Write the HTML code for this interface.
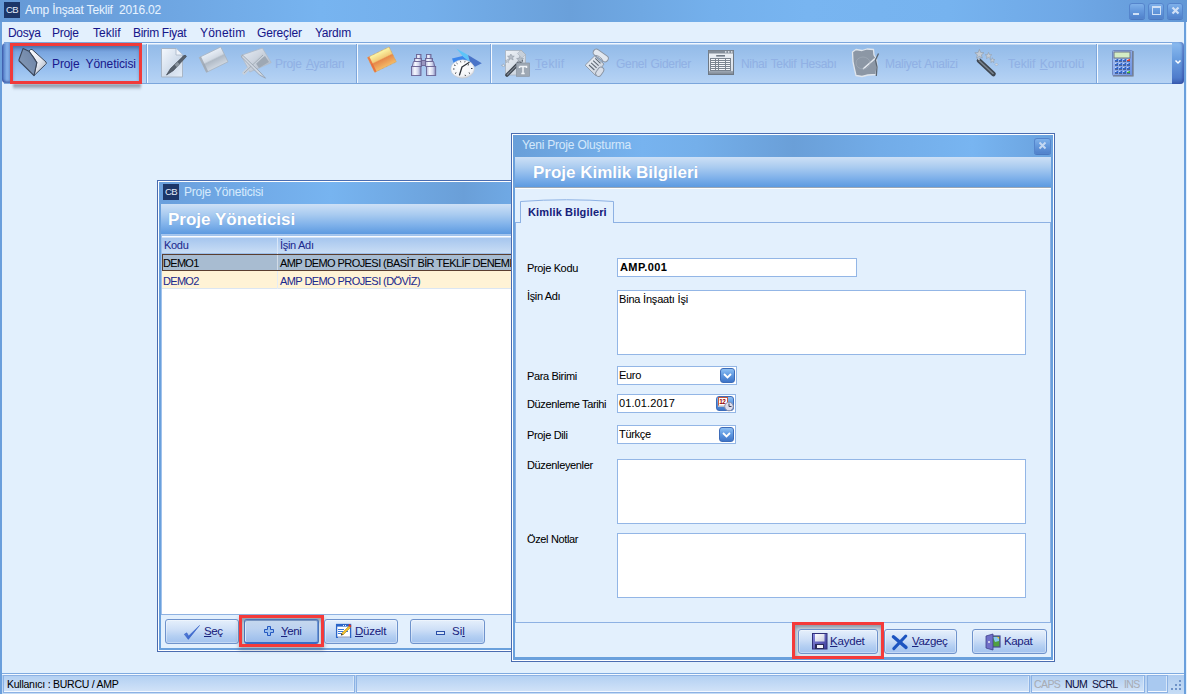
<!DOCTYPE html>
<html><head><meta charset="utf-8">
<style>
*{margin:0;padding:0;box-sizing:border-box}
html,body{width:1187px;height:694px;overflow:hidden}
body{position:relative;background:#e2f0fd;font-family:"Liberation Sans",sans-serif;font-size:11px;color:#000}
.a{position:absolute}
.t{position:absolute;white-space:nowrap;line-height:1}
/* title bars */
.tbar{background:linear-gradient(90deg,#6599d6 0%,#6a9fdb 8%,#77b4f0 27%,#74afeb 36%,#6aa0da 48%,#74b0ec 60%,#78b5f1 68%,#76b3ef 80%,#6fa8e6 90%,#6398d6 100%)}
.cb{position:absolute;background:#1c3668;color:#e4ecfa;font-size:9.5px;text-align:center;line-height:16px;width:16px;height:16px;letter-spacing:-0.6px;font-weight:normal}
.wbtn{position:absolute;width:16px;height:16px;border-radius:3px;background:linear-gradient(180deg,#82b4ec 0%,#6498dc 50%,#4f80ca 100%);box-shadow:inset 0 0 0 1px #5585cc,0 1px 0 #4a78c0}
.hdr{background:linear-gradient(180deg,#cde0f6 0%,#a9cbf0 35%,#7fb1ea 70%,#5d9ae0 100%)}
.hdrtxt{position:absolute;font-weight:bold;color:#fff;font-size:18px;line-height:1;text-shadow:0 0 1px #7aa0d8}
.btn{position:absolute;height:25px;border:1px solid #6f93cc;border-radius:3px;background:linear-gradient(180deg,#e6f0fc 0%,#cfe0f7 40%,#b4cff2 70%,#a2c2ee 100%);box-shadow:inset 0 0 0 1px rgba(255,255,255,.35);color:#1a237e;font-size:12px}
.inp{position:absolute;background:#fff;border:1px solid #93b6e6}
.lbl{position:absolute;white-space:nowrap;line-height:1;font-size:11px;color:#000;letter-spacing:-0.35px}
.dis{color:#91b1e5}
.menu{position:absolute;top:27px;font-size:12px;color:#17178a;line-height:1;white-space:nowrap;letter-spacing:-0.3px}
.tsep{position:absolute;top:44px;width:2px;height:39px;border-left:1px solid #7ea7dc;border-right:1px solid #f4f9ff}
.st{position:absolute;font-size:10.5px;line-height:1;white-space:nowrap;letter-spacing:-0.6px}
.t,.lbl,.menu,.st{-webkit-text-stroke:0.05px currentColor}
.hdrtxt{-webkit-text-stroke:0}
u{text-decoration:underline;text-underline-offset:1px;text-decoration-thickness:1px}
</style></head><body>

<!-- main title bar -->
<div class="a tbar" style="left:0;top:0;width:1187px;height:22px"></div>
<div class="cb" style="left:4px;top:2px">CB</div>
<div class="t" style="left:25px;top:4px;font-size:12px;color:#e6f2ff;letter-spacing:-0.2px">Amp İnşaat Teklif&nbsp; 2016.02</div>
<div class="wbtn" style="left:1129px;top:3px"><div class="a" style="left:4px;top:10px;width:6px;height:2px;background:#d0e0f6"></div></div>
<div class="wbtn" style="left:1148px;top:3px"><div class="a" style="left:4px;top:3px;width:9px;height:9px;border:1px solid #d0e0f6;border-top-width:2px"></div></div>
<div class="wbtn" style="left:1167px;top:3px"><svg class="a" style="left:0;top:0" width="17" height="16"><path d="M5.5 4.5 L11.5 10.5 M11.5 4.5 L5.5 10.5" stroke="#d0e0f6" stroke-width="2.2"/></svg></div>

<!-- window side borders -->
<div class="a" style="left:0;top:22px;width:2px;height:672px;background:#6a9fdc"></div>
<div class="a" style="left:1184px;top:22px;width:2px;height:672px;background:#6a9fdc"></div>
<div class="a" style="left:1186px;top:22px;width:1px;height:672px;background:#e6f1fc"></div>

<!-- menu bar -->
<div class="a" style="left:2px;top:22px;width:1182px;height:20px;background:#e3f0fd"></div>
<div class="menu" style="left:8px">Dosya</div>
<div class="menu" style="left:52px">Proje</div>
<div class="menu" style="left:93px;letter-spacing:0.05px">Teklif</div>
<div class="menu" style="left:133px">Birim Fiyat</div>
<div class="menu" style="left:200px;letter-spacing:0.2px">Yönetim</div>
<div class="menu" style="left:257px;letter-spacing:-0.15px">Gereçler</div>
<div class="menu" style="left:315px">Yardım</div>

<!-- toolbar -->
<div class="a" style="left:2px;top:42px;width:1182px;height:42px;background:#e3f0fd"></div>
<div class="a" style="left:4px;top:42px;width:1170px;height:42px;border-top:1px solid #7ba6dc;border-bottom:1px solid #7ba6dc;background:linear-gradient(180deg,#f2f8ff 0,#f2f8ff 1px,#93bbe8 2px,#a3c6ef 50%,#b6d3f4 100%)"></div>
<div class="a" style="left:2px;top:43px;width:8px;height:40px;border-radius:4px 0 0 4px;background:linear-gradient(90deg,#3e5eb0 0%,#6590d4 30%,#84b0ea 60%,#7aa6e2 100%);box-shadow:inset 0 -2px 2px rgba(40,60,140,.5)"></div>
<div class="a" style="left:1172px;top:42px;width:12px;height:42px;border-radius:0 4px 4px 0;background:linear-gradient(180deg,#8cbcf0 0%,#6a9ee0 40%,#4f7ccc 85%,#3a5cb0 100%);box-shadow:inset -2px 0 2px rgba(40,60,150,.45)"></div>
<svg class="a" style="left:1172px;top:42px" width="12" height="42"><path d="M3.5 18.5 L6 21 L8.5 18.5" stroke="#fff" stroke-width="1.5" fill="none"/></svg>

<!-- toolbar content -->
<!-- red highlight: proje yoneticisi -->
<div class="a" style="left:13px;top:84px;width:128px;height:6px;background:linear-gradient(180deg,rgba(70,80,100,.7),rgba(70,80,100,0));filter:blur(1.2px)"></div>
<div class="a" style="left:10px;top:43px;width:132px;height:41px;border:3px solid #f03a3a;background:linear-gradient(180deg,#5f89c6 0%,#7aa6e0 18%,#8fb9ec 50%,#a9cdf4 100%)"></div>
<div class="a" style="left:13px;top:46px;width:126px;height:35px;box-shadow:inset 0 2px 3px rgba(40,70,120,.35)"></div>
<svg class="a" style="left:14px;top:45px" width="36" height="36" viewBox="0 0 36 36">
 <defs><linearGradient id="fw" x1="0" y1="0" x2="1" y2="1"><stop offset="0" stop-color="#fdfeff"/><stop offset=".55" stop-color="#e4e8f0"/><stop offset="1" stop-color="#9aa4b4"/></linearGradient>
 <linearGradient id="ff" x1="0" y1="1" x2="1" y2="0"><stop offset="0" stop-color="#b4c2d6"/><stop offset=".3" stop-color="#7f94b2"/><stop offset="1" stop-color="#6a82a6"/></linearGradient></defs>
 <path d="M15 6.2 Q16 4 18 4.4 L32 17 Q33 18.5 31.5 19.5 L20 30.6 L22.8 17.6 L19.5 12.4 Z" fill="url(#fw)" stroke="#3e4a5c" stroke-width="1"/>
 <path d="M9.1 3.4 L15 6.2 L19.5 12.4 L22.8 17.6 L20 30.6 L5.2 16 Q4.6 15 5.2 14 Z" fill="url(#ff)" stroke="#3a4558" stroke-width="1.1" stroke-linejoin="round"/>
</svg>
<div class="t" style="left:52px;top:58px;font-size:12px;color:#1b1b8e;letter-spacing:-0.1px;word-spacing:3px">Proje Yöneticisi</div>

<div class="tsep" style="left:146px"></div>

<!-- doc + pen -->
<svg class="a" style="left:160px;top:47px" width="28" height="32" viewBox="0 0 28 32">
 <defs><linearGradient id="dp" x1="0" y1="0" x2="1" y2="1"><stop offset="0" stop-color="#f4f8fd"/><stop offset=".6" stop-color="#cfdbea"/><stop offset="1" stop-color="#e6eef8"/></linearGradient></defs>
 <path d="M1.5 1.5 H16 L22.5 8 V30 H1.5 Z" fill="url(#dp)" stroke="#a9b6c6" stroke-width="1"/>
 <path d="M16 1.5 V8 H22.5" fill="#f0f4fa" stroke="#a9b6c6" stroke-width=".8"/>
 <path d="M6.5 28 L10.5 21.5 L23.8 8.6 Q26 7.6 26.4 9.6 L13.5 23.5 Z" fill="#56606c" stroke="#3a424c" stroke-width=".6"/>
 <path d="M14.5 17.8 L17.5 15 L20 17.5 L17 20.3 Z" fill="#8a949e"/>
</svg>
<!-- gray folder -->
<svg class="a" style="left:194px;top:44px" width="40" height="34" viewBox="0 0 40 34">
 <defs><linearGradient id="gf" x1="0" y1="0" x2="0" y2="1"><stop offset="0" stop-color="#e8eef6"/><stop offset=".42" stop-color="#d2dae4"/><stop offset=".52" stop-color="#b0bac6"/><stop offset="1" stop-color="#d0d8e2"/></linearGradient></defs>
 <g transform="translate(5.2,13.5) rotate(-26)">
  <rect x="0" y="0" width="24" height="16.5" fill="url(#gf)" stroke="#a8b2be" stroke-width=".7"/>
  <rect x="0" y="0" width="2" height="16.5" fill="#9aa4b0" opacity=".8"/>
 </g>
</svg>
<!-- cross tools -->
<svg class="a" style="left:238px;top:45px" width="36" height="36" viewBox="0 0 36 36">
 <defs><linearGradient id="cf" x1="0" y1="0" x2="1" y2="1"><stop offset="0" stop-color="#e8eef6"/><stop offset=".6" stop-color="#c4ccd8"/><stop offset="1" stop-color="#aab4c2"/></linearGradient></defs>
 <path d="M3.1 10.4 L24.4 3.1 L33.2 17.6 L11.9 27 Z" fill="url(#cf)" stroke="#b0bac6" stroke-width=".8"/>
 <path d="M17 17 L27 11 L31 17 L21 23 Z" fill="#9ea8b4"/>
 <path d="M6 28 L25 10" stroke="#c8d0da" stroke-width="3.2" stroke-linecap="round"/>
 <path d="M6 28 L25 10" stroke="#98a2ae" stroke-width=".8"/>
 <path d="M4.5 10 L23 28 L27.5 33.2 L21.5 30 L3.5 12 Z" fill="#d0d8e2" stroke="#8c96a4" stroke-width=".7"/>
</svg>
<div class="t dis" style="left:275px;top:58px;font-size:12px;letter-spacing:-0.3px;word-spacing:2px">Proje <u>A</u>yarları</div>

<div class="tsep" style="left:356px"></div>

<!-- orange folder -->
<svg class="a" style="left:362px;top:44px" width="40" height="34" viewBox="0 0 40 34">
 <defs><linearGradient id="of" x1="0" y1="0" x2="0" y2="1"><stop offset="0" stop-color="#fcf8a8"/><stop offset=".42" stop-color="#f2cc7a"/><stop offset=".5" stop-color="#e6884a"/><stop offset="1" stop-color="#f4bc68"/></linearGradient></defs>
 <g transform="translate(5.5,13.5) rotate(-26)">
  <rect x="0" y="0" width="24" height="16.5" fill="url(#of)" stroke="#d8a050" stroke-width=".7" stroke-dasharray="1 .5"/>
  <rect x="0" y="0" width="2" height="16.5" fill="#e8683a" opacity=".85"/>
 </g>
</svg>
<!-- binoculars -->
<svg class="a" style="left:405px;top:48px" width="36" height="32" viewBox="0 0 36 32">
 <defs><linearGradient id="bn" x1="0" y1="0" x2="1" y2="0"><stop offset="0" stop-color="#b4b8dc"/><stop offset=".35" stop-color="#f6f8fe"/><stop offset=".7" stop-color="#d0d4ec"/><stop offset="1" stop-color="#7c80b4"/></linearGradient></defs>
 <g stroke="#6a6494" stroke-width="0.9" fill="url(#bn)">
 <rect x="16.5" y="12.5" width="4" height="5" fill="#9a96c0"/>
 <rect x="11.5" y="6.5" width="4.5" height="4"/>
 <rect x="21.5" y="6.5" width="4.5" height="4"/>
 <rect x="9.5" y="10.5" width="7" height="3"/>
 <rect x="20.5" y="10.5" width="7" height="3"/>
 <path d="M8.5 13.5 H16.5 V18.5 H7.2 Z"/>
 <path d="M20.5 13.5 H28.5 L29.8 18.5 H20.5 Z"/>
 <rect x="6.5" y="18.5" width="9.5" height="9"/>
 <rect x="21.5" y="18.5" width="9.2" height="9"/>
 </g>
</svg>
<!-- clock -->
<svg class="a" style="left:446px;top:45px" width="40" height="36" viewBox="0 0 40 36">
 <defs><radialGradient id="ck" cx=".45" cy=".35" r=".7"><stop offset="0" stop-color="#ffffff"/><stop offset=".75" stop-color="#f4f5f8"/><stop offset="1" stop-color="#b8bcc4"/></radialGradient></defs>
 <path d="M6 13.5 L16.6 10.9 L24 17 L8 19 Z" fill="#3c86ec"/>
 <path d="M10.4 3.4 L22 10 L24 17 L16.6 10.9 Z" fill="#5cc4f8"/>
 <path d="M22 10 L35.8 18.2 L29 21.8 L24 17 Z" fill="#4a74c8"/>
 <ellipse cx="16.6" cy="24" rx="11.7" ry="9.2" fill="url(#ck)" stroke="#c4c8d0" stroke-width=".5"/>
 <path d="M16 22 L23 17.5 M16 22 L13.5 30" stroke="#2e323a" stroke-width="1.3" stroke-linecap="round"/>
 <g stroke="#3a3e46" stroke-width="1"><path d="M14.5 16.3 L14.8 17.3 M19 16.3 L18.7 17.3 M8 20 L9.5 20.5 M7 24 L8.5 24 M26.5 23.5 L25 23.5 M9 28.5 L10.3 27.7 M24 28.5 L22.8 27.7 M19.5 31 L19 29.8 M10.5 18 L11.5 18.8 M23 19.5 L21.8 20.2"/></g>
</svg>

<div class="tsep" style="left:490px"></div>

<!-- wand + T -->
<svg class="a" style="left:500px;top:45px" width="36" height="36" viewBox="0 0 36 36">
 <defs><linearGradient id="wt" x1="0" y1="0" x2="1" y2="1"><stop offset="0" stop-color="#f0f4f9"/><stop offset="1" stop-color="#c2ccd8"/></linearGradient>
 <linearGradient id="wd" x1="0" y1="0" x2="1" y2="0"><stop offset="0" stop-color="#8a939e"/><stop offset=".5" stop-color="#4e5762"/><stop offset="1" stop-color="#7a838e"/></linearGradient></defs>
 <path d="M5.5 5.5 H21 L25.5 9.5 V30 H5.5 Z" fill="url(#wt)" stroke="#a8b2be" stroke-width=".8"/>
 <path d="M21 5 L25.5 9.5 L22 13 L17.5 8.5 Z" fill="#c8d0da" stroke="#8e98a4" stroke-width=".6" stroke-dasharray="1 .6"/>
 <path d="M7 30 L21 15.8" stroke="#3e4650" stroke-width="3.6" stroke-linecap="round"/>
 <path d="M7 30 L21 15.8" stroke="#7e8792" stroke-width="1.2"/>
 <path d="M19.5 11.5 L21 13.5 L23.5 13.5 L21.8 15.2 L22.5 17.5 L20 16.3 L17.8 17.5 L18.4 15 L16.6 13.5 L19 13.3 Z" fill="#b4bcc6" stroke="#8a94a0" stroke-width=".5"/>
 <path d="M10.9 9 L12 11 L14.3 11.2 L12.6 12.7 L13.2 15 L10.9 13.8 L8.6 15 L9.2 12.7 L7.5 11.2 L9.8 11 Z" fill="#b4bcc6" stroke="#8a94a0" stroke-width=".5"/>
 <path d="M7.3 14.3 L8 15.4 L9.3 15.6 L8.4 16.4 L8.7 17.7 L7.3 17 L6 17.7 L6.3 16.4 L5.3 15.6 L6.6 15.4 Z" fill="#c8d0da" stroke="#8a94a0" stroke-width=".4"/>
 <path d="M3.4 18.7 L4.1 20.2 L5.5 20.3 L4.1 21 L3.4 22 L2.7 21 L1.3 20.3 L2.7 20.2 Z" fill="#e2e8f0" stroke="#8a94a0" stroke-width=".4"/>
 <rect x="16.5" y="18" width="13" height="13.3" fill="#9ea8b4" stroke="#8a94a0" stroke-width=".7"/>
 <path d="M19.5 21.5 H26.5 V23 M19.5 21.5 V23 M23 21.5 V28.5 M21.3 28.5 H24.7" stroke="#f2f5f9" stroke-width="1.5" fill="none"/>
</svg>
<div class="t dis" style="left:535px;top:58px;font-size:12px;letter-spacing:0.35px"><u>T</u>eklif</div>
<!-- scroll -->
<svg class="a" style="left:580px;top:45px" width="36" height="36" viewBox="0 0 36 36">
 <defs><linearGradient id="sc" x1="0" y1="0" x2="1" y2="1"><stop offset="0" stop-color="#f0f4f9"/><stop offset="1" stop-color="#c4ccd8"/></linearGradient></defs>
 <path d="M5.2 20.2 L14.5 11 L24 19 L15.6 30.5 Z" fill="url(#sc)" stroke="#8a94a2" stroke-width=".9" stroke-linejoin="round"/>
 <path d="M18.5 28.5 L21 25" stroke="#8a94a2" stroke-width="6.6" stroke-linecap="round"/>
 <path d="M18.5 28.5 L21 25" stroke="#d8dee8" stroke-width="4.8" stroke-linecap="round"/>
 <path d="M16.5 7.5 L25 13.5" stroke="#8a94a2" stroke-width="7.4" stroke-linecap="round"/>
 <path d="M16.5 7.5 L25 13.5" stroke="#e2e8f0" stroke-width="5.6" stroke-linecap="round"/>
 <path d="M14.5 11 Q17 9 22 14 L22.5 17.5" fill="none" stroke="#8a94a2" stroke-width=".9"/>
 <g stroke="#5e6874" stroke-width="1.1"><path d="M15.3 13.4 L20.5 18.4 M13.2 15.6 L18.6 20.6 M11.1 17.8 L16.6 22.8 M9.0 20 L14.4 25"/></g>
</svg>
<div class="t dis" style="left:616px;top:58px;font-size:12px;letter-spacing:-0.3px;word-spacing:1px">Genel Giderler</div>
<!-- table -->
<svg class="a" style="left:704px;top:45px" width="36" height="36" viewBox="0 0 36 36">
 <defs><linearGradient id="tb" x1="0" y1="0" x2="0" y2="1"><stop offset="0" stop-color="#eef2f7"/><stop offset=".85" stop-color="#d8dfe8"/><stop offset=".86" stop-color="#9ea8b4"/><stop offset="1" stop-color="#7c8692"/></linearGradient></defs>
 <rect x="4.5" y="5.5" width="25" height="24" fill="url(#tb)" stroke="#6e7884" stroke-width="1"/>
 <rect x="4.5" y="5.5" width="25" height="3" fill="#848e9a"/>
 <g fill="#e8ecf2"><rect x="21" y="6.2" width="1.4" height="1.4"/><rect x="24" y="6.2" width="1.4" height="1.4"/><rect x="27" y="6.2" width="1.4" height="1.4"/></g>
 <rect x="12.2" y="10" width="8.8" height="1.6" fill="#707a86"/>
 <rect x="6" y="13" width="21" height="13" fill="#7a8490"/>
 <g fill="#f4f6fa"><rect x="7" y="14" width="4" height="1"/><rect x="12" y="14" width="2" height="1"/><rect x="15" y="14" width="6" height="1"/><rect x="22" y="14" width="4" height="1"/><rect x="7" y="16" width="4" height="1"/><rect x="12" y="16" width="2" height="1"/><rect x="15" y="16" width="6" height="1"/><rect x="22" y="16" width="4" height="1"/><rect x="7" y="18" width="4" height="1"/><rect x="12" y="18" width="2" height="1"/><rect x="15" y="18" width="6" height="1"/><rect x="22" y="18" width="4" height="1"/><rect x="7" y="20" width="4" height="1"/><rect x="12" y="20" width="2" height="1"/><rect x="15" y="20" width="6" height="1"/><rect x="22" y="20" width="4" height="1"/><rect x="7" y="22" width="4" height="1"/><rect x="12" y="22" width="2" height="1"/><rect x="15" y="22" width="6" height="1"/><rect x="22" y="22" width="4" height="1"/><rect x="7" y="24" width="4" height="1"/><rect x="12" y="24" width="2" height="1"/><rect x="15" y="24" width="6" height="1"/><rect x="22" y="24" width="4" height="1"/></g>
</svg>
<div class="t dis" style="left:741px;top:58px;font-size:12px;letter-spacing:-0.3px;word-spacing:1px">Nihai Teklif Hesabı</div>
<!-- maliyet -->
<svg class="a" style="left:848px;top:45px" width="36" height="36" viewBox="0 0 36 36">
 <path d="M4.5 7 L8 4.5 L14 5.5 L19 4 L25.5 4.5 L26 10 L28.5 14 L29 22 L28 29.5 L20 30 L14 31.5 L8 30.5 L6.5 24 L5 17 Z" fill="#8c97a5" stroke="#dfe5ec" stroke-width="1.3" stroke-linejoin="round"/>
 <path d="M15 24 L27 13.5" stroke="#e6ebf1" stroke-width="1.6"/>
 <path d="M30.5 8.5 L27.5 15 L29 22 L28.3 31" stroke="#5c6672" stroke-width="1.3" fill="none"/>
 <ellipse cx="15" cy="18" rx="7" ry="6" fill="none" stroke="#a4aebb" stroke-width=".6"/>
</svg>
<div class="t dis" style="left:885px;top:58px;font-size:12px;letter-spacing:-0.3px;word-spacing:1px">Maliyet Analizi</div>
<!-- wand -->
<svg class="a" style="left:968px;top:45px" width="36" height="36" viewBox="0 0 36 36">
 <path d="M11 15.5 L25.5 29" stroke="#3e4650" stroke-width="4.6" stroke-linecap="round"/>
 <path d="M11 15.5 L25.5 29" stroke="#7a848f" stroke-width="1.6"/>
 <path d="M11.40 4.40 L12.67 7.45 L15.97 7.72 L13.45 9.87 L14.22 13.08 L11.40 11.36 L8.58 13.08 L9.35 9.87 L6.83 7.72 L10.13 7.45 Z" fill="#c4ccd6" stroke="#8e98a4" stroke-width=".6"/>
 <path d="M10.5 12.5 L11 15" stroke="#b8c0ca" stroke-width="2"/>
 <path d="M20.50 7.30 L21.43 9.53 L23.83 9.72 L22.00 11.29 L22.56 13.63 L20.50 12.38 L18.44 13.63 L19.00 11.29 L17.17 9.72 L19.57 9.53 Z" fill="#c4ccd6" stroke="#8e98a4" stroke-width=".5"/>
 <path d="M24.40 12.70 L25.11 14.42 L26.97 14.57 L25.56 15.78 L25.99 17.58 L24.40 16.62 L22.81 17.58 L23.24 15.78 L21.83 14.57 L23.69 14.42 Z" fill="#c4ccd6" stroke="#8e98a4" stroke-width=".5"/>
 <path d="M28.5 18 L30 19.5 L28.5 21 L27 19.5 Z" fill="#d4dae2" stroke="#8e98a4" stroke-width=".4"/>
</svg>
<div class="t dis" style="left:1008px;top:58px;font-size:12px;letter-spacing:0px;word-spacing:1px">Teklif <u>K</u>ontrolü</div>

<div class="tsep" style="left:1096px"></div>
<!-- calculator -->
<svg class="a" style="left:1112px;top:50px" width="22" height="27" viewBox="0 0 22 27">
 <defs><linearGradient id="cl" x1="0" y1="0" x2="1" y2="1"><stop offset="0" stop-color="#a8c4f4"/><stop offset="1" stop-color="#6a8ee0"/></linearGradient></defs>
 <rect x="0.5" y="0.5" width="20" height="25" rx="1" fill="url(#cl)" stroke="#7088c0" stroke-width="1"/>
 <path d="M21 1 V26 H1" stroke="#6e7684" stroke-width="1.2" fill="none"/>
 <rect x="2" y="2" width="16" height="6" fill="#d4ecc4" stroke="#6e7684" stroke-width="1"/>
 <g><rect x="3" y="9" width="3" height="2" fill="#2e64c8"/><rect x="3" y="9" width="1.5" height="1" fill="#e8f0fc" opacity=".8"/><rect x="3" y="11" width="3" height="1" fill="#3a4a70" opacity=".7"/><rect x="7" y="9" width="3" height="2" fill="#2e64c8"/><rect x="7" y="9" width="1.5" height="1" fill="#e8f0fc" opacity=".8"/><rect x="7" y="11" width="3" height="1" fill="#3a4a70" opacity=".7"/><rect x="11" y="9" width="3" height="2" fill="#2e64c8"/><rect x="11" y="9" width="1.5" height="1" fill="#e8f0fc" opacity=".8"/><rect x="11" y="11" width="3" height="1" fill="#3a4a70" opacity=".7"/><rect x="15" y="9" width="3" height="2" fill="#e04030"/><rect x="15" y="9" width="1.5" height="1" fill="#e8f0fc" opacity=".8"/><rect x="15" y="11" width="3" height="1" fill="#3a4a70" opacity=".7"/><rect x="3" y="13" width="3" height="2" fill="#2e64c8"/><rect x="3" y="13" width="1.5" height="1" fill="#e8f0fc" opacity=".8"/><rect x="3" y="15" width="3" height="1" fill="#3a4a70" opacity=".7"/><rect x="7" y="13" width="3" height="2" fill="#2e64c8"/><rect x="7" y="13" width="1.5" height="1" fill="#e8f0fc" opacity=".8"/><rect x="7" y="15" width="3" height="1" fill="#3a4a70" opacity=".7"/><rect x="11" y="13" width="3" height="2" fill="#2e64c8"/><rect x="11" y="13" width="1.5" height="1" fill="#e8f0fc" opacity=".8"/><rect x="11" y="15" width="3" height="1" fill="#3a4a70" opacity=".7"/><rect x="15" y="13" width="3" height="2" fill="#2e64c8"/><rect x="15" y="13" width="1.5" height="1" fill="#e8f0fc" opacity=".8"/><rect x="15" y="15" width="3" height="1" fill="#3a4a70" opacity=".7"/><rect x="3" y="17" width="3" height="2" fill="#2e64c8"/><rect x="3" y="17" width="1.5" height="1" fill="#e8f0fc" opacity=".8"/><rect x="3" y="19" width="3" height="1" fill="#3a4a70" opacity=".7"/><rect x="7" y="17" width="3" height="2" fill="#2e64c8"/><rect x="7" y="17" width="1.5" height="1" fill="#e8f0fc" opacity=".8"/><rect x="7" y="19" width="3" height="1" fill="#3a4a70" opacity=".7"/><rect x="11" y="17" width="3" height="2" fill="#2e64c8"/><rect x="11" y="17" width="1.5" height="1" fill="#e8f0fc" opacity=".8"/><rect x="11" y="19" width="3" height="1" fill="#3a4a70" opacity=".7"/><rect x="15" y="17" width="3" height="2" fill="#2e64c8"/><rect x="15" y="17" width="1.5" height="1" fill="#e8f0fc" opacity=".8"/><rect x="15" y="19" width="3" height="1" fill="#3a4a70" opacity=".7"/><rect x="3" y="21" width="3" height="2" fill="#2e64c8"/><rect x="3" y="21" width="1.5" height="1" fill="#e8f0fc" opacity=".8"/><rect x="3" y="23" width="3" height="1" fill="#3a4a70" opacity=".7"/><rect x="7" y="21" width="3" height="2" fill="#2e64c8"/><rect x="7" y="21" width="1.5" height="1" fill="#e8f0fc" opacity=".8"/><rect x="7" y="23" width="3" height="1" fill="#3a4a70" opacity=".7"/><rect x="11" y="21" width="3" height="2" fill="#2e64c8"/><rect x="11" y="21" width="1.5" height="1" fill="#e8f0fc" opacity=".8"/><rect x="11" y="23" width="3" height="1" fill="#3a4a70" opacity=".7"/><rect x="15" y="21" width="3" height="2" fill="#40b040"/><rect x="15" y="21" width="1.5" height="1" fill="#e8f0fc" opacity=".8"/><rect x="15" y="23" width="3" height="1" fill="#3a4a70" opacity=".7"/></g>
</svg>


<!-- ============ child window: Proje Yoneticisi ============ -->
<div class="a" style="left:157px;top:180px;width:360px;height:472px;border:1px solid #4a6cb0;background:#fff"></div>
<div class="a" style="left:159px;top:182px;width:358px;height:468px;background:#6aa0dc"></div>
<div class="a tbar" style="left:159px;top:182px;width:358px;height:22px;background:linear-gradient(90deg,#6a9fdc 0%,#72ace9 30%,#77b4f0 48%,#6a9fd8 85%,#70aae6 100%)"></div>
<div class="cb" style="left:163px;top:184px">CB</div>
<div class="t" style="left:184px;top:186px;font-size:12px;color:#d6eafc;letter-spacing:-0.2px">Proje Yöneticisi</div>
<div class="a hdr" style="left:161px;top:204px;width:356px;height:30px"></div>
<div class="hdrtxt" style="left:168px;top:211px;font-size:17px">Proje Yöneticisi</div>
<div class="a" style="left:161px;top:234px;width:356px;height:1px;background:#a6c6ee"></div>
<!-- grid -->
<div class="a" style="left:161px;top:235px;width:356px;height:380px;background:#fff;border:1px solid #a0c2ec"></div>
<div class="a" style="left:162px;top:236px;width:354px;height:18px;background:linear-gradient(180deg,#fafcff 0,#fafcff 1px,#a6c6ee 2px,#c9ddf5 100%);border-bottom:1px solid #9ebfe9"></div>
<div class="a" style="left:277px;top:237px;width:1px;height:17px;background:#d8e6f8"></div>
<div class="t" style="left:164px;top:240px;font-size:11px;color:#1c2a8e;letter-spacing:-0.3px">Kodu</div>
<div class="t" style="left:280px;top:240px;font-size:11px;color:#1c2a8e;letter-spacing:-0.3px">İşin Adı</div>
<div class="a" style="left:162px;top:254px;width:354px;height:17px;background:#a8bcd1;border:1px solid #5a3e30"></div>
<div class="a" style="left:277px;top:255px;width:1px;height:15px;background:#d2dbe6"></div>
<div class="t" style="left:163px;top:258px;font-size:11px;color:#000;letter-spacing:-0.7px">DEMO1</div>
<div class="t" style="left:280px;top:258px;font-size:11px;color:#000;letter-spacing:-0.575px">AMP DEMO PROJESI (BASİT BİR TEKLİF DENEMESİ)</div>
<div class="a" style="left:162px;top:271px;width:354px;height:18px;background:#fff3d6;border-bottom:1px solid #dbe6f3"></div>
<div class="a" style="left:277px;top:271px;width:1px;height:18px;background:#e4ecf5"></div>
<div class="t" style="left:163px;top:276px;font-size:11px;color:#1c2a8e;letter-spacing:-0.7px">DEMO2</div>
<div class="t" style="left:280px;top:276px;font-size:11px;color:#1c2a8e;letter-spacing:-0.575px">AMP DEMO PROJESI (DÖVİZ)</div>
<!-- button strip -->
<div class="a" style="left:161px;top:614px;width:356px;height:34px;background:#e3f0fd;border-top:1px solid #8fb2e2"></div>

<div class="btn" style="left:165px;top:619px;width:74px">
 <svg class="a" style="left:12px;top:-1px" width="26" height="26" viewBox="0 0 26 26"><defs><linearGradient id="ck2" x1="0" y1="0" x2="1" y2="1"><stop offset="0" stop-color="#6c90dc"/><stop offset="1" stop-color="#2050c8"/></linearGradient></defs><path d="M6.3 15.3 L8.8 13.8 L10.6 17 L21.6 6.4 L10.3 20.4 Z" fill="url(#ck2)" stroke="#2a58c0" stroke-width=".5" stroke-linejoin="round"/></svg>
 <div class="t" style="left:38px;top:6px;font-size:11.5px;letter-spacing:-0.35px"><u>S</u>eç</div>
</div>
<div class="a" style="left:242px;top:618px;width:79px;height:26px;background:#dce8f4;box-shadow:inset 1px 3px 4px rgba(70,80,95,.5)"></div>
<div class="a" style="left:239px;top:615px;width:85px;height:32px;border:3px solid #f43a3a;box-shadow:0 3px 4px rgba(60,70,90,.4)"></div>
<div class="btn" style="left:244px;top:619px;width:75px;border-color:#4a74b8;border-bottom:2px solid #3a6cc8;background:linear-gradient(180deg,#c6d8ee 0%,#bcd2f0 40%,#a8c6ee 75%,#9cbcea 100%);box-shadow:inset 0 1px 0 #7894c0,inset 1px 0 0 #dce8f8,inset -1px 0 0 #6a96d8">
 <svg class="a" style="left:19px;top:6px" width="11" height="11" viewBox="0 0 11 11"><path d="M3.5 0.5 H6.5 V3.5 H9.5 V6.5 H6.5 V9.5 H3.5 V6.5 H0.5 V3.5 H3.5 Z" fill="#9cc0ee" stroke="#2458c0" stroke-width="1"/></svg>
 <div class="t" style="left:36px;top:6px;font-size:11.5px;letter-spacing:-0.35px"><u>Y</u>eni</div>
</div>
<div class="btn" style="left:324px;top:619px;width:74px">
 <svg class="a" style="left:5px;top:0px" width="30" height="25" viewBox="0 0 30 25"><rect x="6.6" y="4.5" width="14" height="12.8" fill="#fff" stroke="#2a64c8" stroke-width="1.3"/><rect x="6" y="4" width="15" height="2.6" fill="#2a64c8"/><g fill="#e8f0fc"><rect x="13" y="5" width="1" height="1"/><rect x="15" y="5" width="1" height="1"/></g><path d="M8 17 H20" stroke="#c8ccd8" stroke-width="1.5"/><path d="M8 9.5 H14 M8 11.5 H13 M8 13.5 H12 M15 11.5 H18" stroke="#3a78d8" stroke-width="1"/><path d="M11.5 13.5 L19 6 L20.5 7.5 L13 15 Z" fill="#f0c030" stroke="#9a7a10" stroke-width=".5"/><path d="M11.5 13.5 L13 15 L10.8 15.6 Z" fill="#202020"/><path d="M18.3 5.2 L19.5 4 L21.5 6 L20.3 7.2 Z" fill="#e83020"/></svg>
 <div class="t" style="left:30px;top:6px;font-size:11.5px;letter-spacing:-0.25px"><u>D</u>üzelt</div>
</div>
<div class="btn" style="left:410px;top:619px;width:75px">
 <div class="a" style="left:25px;top:11px;width:9px;height:4px;background:#d8e6f8;border:1px solid #2a4fa8"></div>
 <div class="t" style="left:41px;top:6px;font-size:11.5px;letter-spacing:0px">Si<u>l</u></div>
</div>
<!-- ============ dialog: Yeni Proje Olusturma ============ -->
<div class="a" style="left:511px;top:133px;width:544px;height:529px;border:1px solid #4a6cb0;background:#fff"></div>
<div class="a" style="left:513px;top:135px;width:540px;height:525px;background:#6aa0dc"></div>
<div class="a" style="left:513px;top:135px;width:540px;height:22px;background:linear-gradient(90deg,#699fd9 0%,#77b3ef 24%,#74afea 34%,#6a9fd8 52%,#72ace8 68%,#78b5f1 85%,#6aa2de 100%)"></div>
<div class="t" style="left:522px;top:139px;font-size:12px;color:#d4e8fb;letter-spacing:-0.2px">Yeni Proje Oluşturma</div>
<div class="wbtn" style="left:1034px;top:138px;width:17px;height:16px"><svg class="a" style="left:0;top:0" width="17" height="16"><path d="M5.5 4.5 L11.5 10.5 M11.5 4.5 L5.5 10.5" stroke="#c4d8f2" stroke-width="2"/></svg></div>
<div class="a hdr" style="left:515px;top:157px;width:536px;height:31px;border-bottom:1px solid #9aa6b4"></div>
<div class="hdrtxt" style="left:533px;top:164px;font-size:17px">Proje Kimlik Bilgileri</div>
<div class="a" style="left:515px;top:188px;width:536px;height:469px;background:#e3f0fd;border-top:1px solid #fff"></div>
<!-- tab -->
<div class="a" style="left:515px;top:222px;width:536px;height:401px;border-top:1px solid #8db1e3;border-bottom:1px solid #8db1e3"></div>
<div class="a" style="left:515px;top:222px;width:1px;height:400px;background:#8db1e3"></div>
<div class="a" style="left:1050px;top:222px;width:1px;height:400px;background:#8db1e3"></div>
<svg class="a" style="left:519px;top:198px" width="96" height="26" viewBox="0 0 96 26"><path d="M1.5 25 V3.5 Q47 0 94.5 3.5 V25" fill="#e3f0fd" stroke="#8db1e3" stroke-width="1"/><rect x="2" y="24" width="92" height="2" fill="#e3f0fd"/></svg>
<div class="t" style="left:528px;top:207px;font-size:11px;font-weight:bold;color:#15207a;letter-spacing:0.15px">Kimlik Bilgileri</div>
<!-- form -->
<div class="lbl" style="left:527px;top:263px">Proje Kodu</div>
<div class="inp" style="left:617px;top:258px;width:240px;height:19px"></div>
<div class="t" style="left:620px;top:262px;font-size:11px;font-weight:bold;color:#000;letter-spacing:0.4px">AMP.001</div>
<div class="lbl" style="left:527px;top:291px">İşin Adı</div>
<div class="inp" style="left:617px;top:290px;width:409px;height:65px"></div>
<div class="t" style="left:619px;top:294px;font-size:11px;color:#000;letter-spacing:-0.2px">Bina İnşaatı İşi</div>
<div class="lbl" style="left:527px;top:371px">Para Birimi</div>
<div class="inp" style="left:617px;top:366px;width:120px;height:19px"></div>
<div class="t" style="left:619px;top:370px;font-size:11px;color:#000;letter-spacing:-0.3px">Euro</div>
<div class="lbl" style="left:527px;top:399px">Düzenleme Tarihi</div>
<div class="inp" style="left:617px;top:394px;width:119px;height:19px"></div>
<div class="t" style="left:619px;top:398px;font-size:11px;color:#000;letter-spacing:0.1px">01.01.2017</div>
<div class="lbl" style="left:527px;top:430px">Proje Dili</div>
<div class="inp" style="left:617px;top:425px;width:119px;height:19px"></div>
<div class="t" style="left:619px;top:429px;font-size:11px;color:#000;letter-spacing:-0.3px">Türkçe</div>
<div class="lbl" style="left:527px;top:460px">Düzenleyenler</div>
<div class="inp" style="left:617px;top:459px;width:409px;height:65px"></div>
<div class="lbl" style="left:527px;top:534px">Özel Notlar</div>
<div class="inp" style="left:617px;top:533px;width:409px;height:65px"></div>
<!-- combo buttons -->
<div class="a" style="left:720px;top:368px;width:15px;height:15px;border-radius:3px;background:linear-gradient(180deg,#8ec0f4 0%,#5d97e0 50%,#3f75c8 100%);border:1px solid #3e6cb8"></div>
<svg class="a" style="left:720px;top:368px" width="15" height="15"><path d="M4 6 L7.5 9.5 L11 6" stroke="#fff" stroke-width="1.8" fill="none"/></svg>
<div class="a" style="left:719px;top:427px;width:15px;height:15px;border-radius:3px;background:linear-gradient(180deg,#8ec0f4 0%,#5d97e0 50%,#3f75c8 100%);border:1px solid #3e6cb8"></div>
<svg class="a" style="left:719px;top:427px" width="15" height="15"><path d="M4 6 L7.5 9.5 L11 6" stroke="#fff" stroke-width="1.8" fill="none"/></svg>
<!-- date button -->
<div class="a" style="left:716px;top:396px;width:18px;height:15px;border-radius:3px;background:linear-gradient(180deg,#8ec0f4 0%,#5d97e0 50%,#3f75c8 100%);border:1px solid #3e6cb8"></div>
<svg class="a" style="left:716px;top:395px" width="19" height="17" viewBox="0 0 19 17"><rect x="2.5" y="2.5" width="9" height="9" fill="#fff" stroke="#c85a40" stroke-width="1"/><rect x="2" y="10.5" width="10" height="1.5" fill="#b8bcc8"/><text x="3.2" y="9" font-size="6.5" font-family="Liberation Sans" font-weight="bold" fill="#900" letter-spacing="-0.6">12</text><circle cx="13" cy="11.5" r="4.3" fill="#dcdcec" stroke="#8a90a8" stroke-width="1"/><path d="M13 8.5 V11.5 H15.5" stroke="#404458" stroke-width="1" fill="none"/></svg>
<!-- bottom buttons -->
<div class="a" style="left:795px;top:625px;width:86px;height:31px;background:#dde9f5;box-shadow:inset 1px 3px 4px rgba(70,80,95,.55)"></div>
<div class="a" style="left:792px;top:622px;width:92px;height:37px;border:3px solid #f43a3a"></div>
<div class="btn" style="left:798px;top:629px;width:80px">
 <svg class="a" style="left:13px;top:3px" width="16" height="17" viewBox="0 0 16 17"><defs><linearGradient id="fl" x1="0" y1="0" x2="1" y2="1"><stop offset="0" stop-color="#8c8ce0"/><stop offset="1" stop-color="#3a3a98"/></linearGradient><linearGradient id="fl2" x1="0" y1="0" x2="1" y2="1"><stop offset="0" stop-color="#fff"/><stop offset="1" stop-color="#c8cce0"/></linearGradient></defs><rect x="0.5" y="0.5" width="14.5" height="15.5" fill="url(#fl)" stroke="#30307a" stroke-width="1"/><rect x="3" y="1" width="9.5" height="7.5" fill="url(#fl2)"/><rect x="3" y="11" width="9" height="5" fill="#2a2a5a"/><rect x="5" y="12" width="6" height="3" fill="#f4f4fa"/></svg>
 <div class="t" style="left:31px;top:6px;font-size:11.5px;letter-spacing:-0.2px"><u>K</u>aydet</div>
</div>
<div class="btn" style="left:884px;top:629px;width:73px">
 <svg class="a" style="left:1px;top:-1px" width="25" height="25" viewBox="0 0 25 25"><path d="M7.4 7.8 L20 18.4" stroke="#1c54c0" stroke-width="3.4" stroke-linecap="round"/><path d="M19.8 7 L7.8 19.6" stroke="#1c54c0" stroke-width="3" stroke-linecap="round"/></svg>
 <div class="t" style="left:27px;top:6px;font-size:11.5px;letter-spacing:-0.35px"><u>V</u>azgeç</div>
</div>
<div class="btn" style="left:972px;top:629px;width:75px">
 <svg class="a" style="left:12px;top:3px" width="17" height="18" viewBox="0 0 17 18"><rect x="7" y="3" width="8" height="11" fill="#50a040" stroke="#4a4a98" stroke-width="1.2"/><path d="M8 4 H14 V8 L10 9 Z" fill="#88c8f0"/><path d="M12 4 H14 V6 Z" fill="#f0c020"/><path d="M1 3 L8 1 V17 L1 15 Z" fill="#7070c8" stroke="#40408c" stroke-width=".8"/><path d="M3 9 H5 M4 8 V10" stroke="#fff" stroke-width=".8"/></svg>
 <div class="t" style="left:31px;top:6px;font-size:11.5px;letter-spacing:-0.35px">Kapat</div>
</div>

<!-- status bar -->
<div class="a" style="left:2px;top:673px;width:1182px;height:21px;background:linear-gradient(180deg,#7eaae0 0,#7eaae0 1px,#f4f9ff 1px,#f4f9ff 2px,#b0cdf0 2px,#c6dcf5 100%)"></div>
<div class="a" style="left:3px;top:675px;width:352px;height:18px;border:1px solid #8cb2e4;box-shadow:inset 0 -1px 0 #f4f9ff,inset -1px 0 0 #d6e6f8;background:linear-gradient(180deg,#b3d0f2,#d2e3f8)"></div>
<div class="a" style="left:356px;top:675px;width:674px;height:18px;border:1px solid #8cb2e4;box-shadow:inset 0 -1px 0 #f4f9ff,inset -1px 0 0 #d6e6f8;background:linear-gradient(180deg,#b3d0f2,#d2e3f8)"></div>
<div class="a" style="left:1031px;top:675px;width:114px;height:18px;border:1px solid #8cb2e4;box-shadow:inset 0 -1px 0 #f4f9ff,inset -1px 0 0 #d6e6f8;background:linear-gradient(180deg,#b3d0f2,#d2e3f8)"></div>
<div class="a" style="left:1147px;top:675px;width:21px;height:18px;border:1px solid #8cb2e4;box-shadow:inset 0 -1px 0 #f4f9ff,inset -1px 0 0 #d6e6f8;background:#a9c9f0"></div>
<svg class="a" style="left:1169px;top:678px" width="14" height="14"><g fill="#6f93c8"><rect x="10" y="2" width="2" height="2"/><rect x="6" y="6" width="2" height="2"/><rect x="10" y="6" width="2" height="2"/><rect x="2" y="10" width="2" height="2"/><rect x="6" y="10" width="2" height="2"/><rect x="10" y="10" width="2" height="2"/></g></svg>
<div class="st" style="left:7px;top:679px;color:#000;letter-spacing:-0.25px">Kullanıcı : BURCU / AMP</div>
<div class="st" style="left:1034px;top:679px;color:#a8acb4">CAPS</div>
<div class="st" style="left:1065px;top:679px;color:#101040">NUM</div>
<div class="st" style="left:1092px;top:679px;color:#101040">SCRL</div>
<div class="st" style="left:1124px;top:679px;color:#a8acb4">INS</div>

</body></html>
